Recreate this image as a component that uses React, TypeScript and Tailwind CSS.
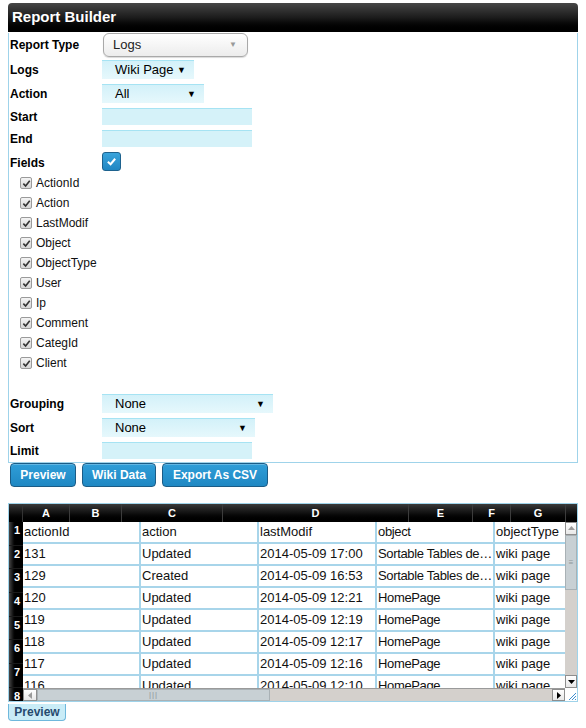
import React from 'react';

const FIELDS = ['ActionId', 'Action', 'LastModif', 'Object', 'ObjectType', 'User', 'Ip', 'Comment', 'CategId', 'Client'];

const COLS = [
  { label: 'A', w: 'w-[47px]' },
  { label: 'B', w: 'w-[52px]' },
  { label: 'C', w: 'w-[101px]' },
  { label: 'D', w: 'w-[186px]' },
  { label: 'E', w: 'w-[64px]' },
  { label: 'F', w: 'w-[38px]' },
  { label: 'G', w: 'w-[55px]' },
];

const ROWS = [
  ['actionId', 'action', 'lastModif', 'object', 'objectType'],
  ['131', 'Updated', '2014-05-09 17:00', 'Sortable Tables de…', 'wiki page'],
  ['129', 'Created', '2014-05-09 16:53', 'Sortable Tables de…', 'wiki page'],
  ['120', 'Updated', '2014-05-09 12:21', 'HomePage', 'wiki page'],
  ['119', 'Updated', '2014-05-09 12:19', 'HomePage', 'wiki page'],
  ['118', 'Updated', '2014-05-09 12:17', 'HomePage', 'wiki page'],
  ['117', 'Updated', '2014-05-09 12:16', 'HomePage', 'wiki page'],
  ['116', 'Updated', '2014-05-09 12:10', 'HomePage', 'wiki page'],
];

const font = "font-['Liberation_Sans',Arial,sans-serif]";

function Caret() {
  return <span className="text-[9px] leading-none text-black">▼</span>;
}

function BlueSelect({ value, width }: { value: string; width: string }) {
  return (
    <div
      className={`${width} h-[19px] flex items-center justify-between pl-[13px] pr-[8px] border-t border-[#a6e3f3] bg-gradient-to-b from-[#d3f1f9] to-[#e6f8fc] text-[13px] text-black`}
    >
      <span>{value}</span>
      <Caret />
    </div>
  );
}

function BlueInput() {
  return <div className="w-[150px] h-[17px] border-t border-[#a6e3f3] bg-[#d5f2f9]" />;
}

function Label({ children }: { children: React.ReactNode }) {
  return <div className="w-[92px] text-[12px] font-bold text-black">{children}</div>;
}

function SmallCheck() {
  return (
    <div className="w-[12px] h-[12px] rounded-[2px] border border-[#9a9a9a] bg-gradient-to-b from-[#f4f4f4] to-[#d6d6d6] flex items-center justify-center">
      <svg viewBox="0 0 10 10" className="w-[9px] h-[9px]">
        <path d="M1.5 5.2 L4 7.8 L8.6 2" fill="none" stroke="#333" strokeWidth="1.8" />
      </svg>
    </div>
  );
}

function Btn({ children, width }: { children: React.ReactNode; width: string }) {
  return (
    <div
      className={`${width} h-[24px] rounded-[4px] border border-[#1b5c86] bg-gradient-to-b from-[#2f9ed8] to-[#1f88c3] text-white text-[12px] font-bold flex items-center justify-center shadow-[inset_0_1px_0_rgba(255,255,255,0.25)]`}
    >
      {children}
    </div>
  );
}

function ArrowBtn({ dir, className }: { dir: 'up' | 'down' | 'left' | 'right'; className: string }) {
  const d = {
    up: 'M1 6 L4.5 2 L8 6 Z',
    down: 'M1 3 L4.5 7 L8 3 Z',
    left: 'M6 1 L2 4.5 L6 8 Z',
    right: 'M3 1 L7 4.5 L3 8 Z',
  }[dir];
  const fill = dir === 'up' || dir === 'left' ? '#9a9a9a' : '#000';
  return (
    <div className={`${className} bg-gradient-to-b from-white to-[#e8e8e8] border border-[#8e8e8e] flex items-center justify-center`}>
      <svg viewBox="0 0 9 9" className="w-[9px] h-[9px]">
        <path d={d} fill={fill} />
      </svg>
    </div>
  );
}

function Sheet() {
  return (
    <div className="mt-[16px] ml-[8px] w-[570px] border border-[#9fd3ea] bg-white">
      {/* column letters */}
      <div className="flex h-[18px] bg-gradient-to-b from-[#3a3a3a] via-[#111] to-black">
        <div className="w-[14px] border-r border-[#333]" />
        {COLS.map((c) => (
          <div
            key={c.label}
            className={`${c.w} border-r border-[#3c3c3c] flex items-center justify-center text-white text-[11px] font-bold`}
          >
            {c.label}
          </div>
        ))}
      </div>
      <div className="flex">
        {/* row numbers */}
        <div className="w-[14px] h-[179px] overflow-hidden flex flex-col bg-black">
          {[1, 2, 3, 4, 5, 6, 7, 8].map((n) => (
            <div
              key={n}
              className="h-[23.7px] shrink-0 flex items-start justify-end pr-[3px] pt-[2px] leading-[12px] text-white text-[11px] font-bold bg-gradient-to-r from-[#4a4a4a] via-black to-black border-b border-[#1a1a1a]"
            >
              {n}
            </div>
          ))}
        </div>
        <div className="flex-1 flex flex-col">
          <div className="flex">
            {/* cells */}
            <div className="w-[542px] h-[166px] overflow-hidden">
              {ROWS.map((r, i) => (
                <div key={i} className="flex h-[22px] shrink-0 border-b-2 border-[#a8d5ea]">
                  {r.map((v, j) => (
                    <div
                      key={j}
                      className={`${j === 4 ? 'w-[69px]' : 'w-[118px] border-r-2 border-[#a8d5ea]'} ${j === 3 ? 'tracking-[-0.35px]' : ''} shrink-0 pl-[1px] text-[13px] leading-[20px] text-[#111] whitespace-nowrap overflow-hidden`}
                    >
                      {v}
                    </div>
                  ))}
                </div>
              ))}
            </div>
            {/* vertical scrollbar */}
            <div className="w-[12px] h-[166px] flex flex-col bg-[#d4d0cc]">
              <ArrowBtn dir="up" className="h-[13px] w-[12px]" />
              <div className="h-[55px] bg-[#c8d0d4] border border-[#a9b1b5] flex items-center justify-center text-[8px] leading-none text-[#8e969a]">
                ≡
              </div>
              <div className="flex-1" />
              <ArrowBtn dir="down" className="h-[13px] w-[12px]" />
            </div>
          </div>
          {/* horizontal scrollbar */}
          <div className="flex h-[13px]">
            <div className="w-[542px] flex bg-[#d4d0cc] border-t border-[#9a9a9a]">
              <ArrowBtn dir="left" className="w-[14px] h-[12px]" />
              <div className="w-[233px] bg-[#c8d0d4] border border-[#a9b1b5] flex items-center justify-center text-[8px] leading-none text-[#8e969a] tracking-[1px]">
                |||
              </div>
              <div className="flex-1" />
              <ArrowBtn dir="right" className="w-[13px] h-[12px]" />
            </div>
            <div className="w-[12px] flex items-end justify-end">
              <svg viewBox="0 0 12 12" className="w-[12px] h-[12px]">
                <path d="M11 4 L4 11 M11 7 L7 11 M11 10 L10 11" stroke="#3f8fd0" strokeWidth="1" />
              </svg>
            </div>
          </div>
        </div>
      </div>
    </div>
  );
}

export default function App() {
  return (
    <div className={`${font} w-[586px] h-[728px] bg-white pt-[3px]`}>
      <div className="ml-[8px] w-[570px]">
        <div className="h-[29px] rounded-t-[4px] bg-gradient-to-b from-[#474747] via-[#1c1c1c] to-black flex items-center pl-[4px] text-white text-[15px] font-bold">
          Report Builder
        </div>
        <div className="border-x border-b border-[#9fd3ea] pl-[1px] pb-[3px]">
          <div className="flex items-center mt-[1px] h-[24px]">
            <Label>Report Type</Label>
            <div className="ml-[1px] w-[145px] h-[24px] rounded-[6px] border border-[#a9a9a9] bg-gradient-to-b from-white to-[#ececec] flex items-center justify-between pl-[9px] pr-[10px] text-[13px] text-[#222] shadow-[0_1px_1px_rgba(0,0,0,0.15)]">
              <span>Logs</span>
              <span className="text-[8px] text-[#999]">▼</span>
            </div>
          </div>
          <div className="flex items-center mt-[3px] h-[19px]">
            <Label>Logs</Label>
            <BlueSelect value="Wiki Page" width="w-[92px]" />
          </div>
          <div className="flex items-center mt-[5px] h-[19px]">
            <Label>Action</Label>
            <BlueSelect value="All" width="w-[102px]" />
          </div>
          <div className="flex items-center mt-[5px] h-[17px]">
            <Label>Start</Label>
            <BlueInput />
          </div>
          <div className="flex items-center mt-[5px] h-[17px]">
            <Label>End</Label>
            <BlueInput />
          </div>
          <div className="flex items-end mt-[5px] h-[20px]">
            <Label>Fields</Label>
            <div className="w-[19px] h-[19px] mb-[1px] rounded-[3px] border border-[#1d628e] bg-gradient-to-b from-[#3aa4dc] to-[#1f86c2] flex items-center justify-center">
              <svg viewBox="0 0 12 12" className="w-[11px] h-[11px]">
                <path d="M2 6.3 L5 9 L10 3" fill="none" stroke="white" strokeWidth="2.2" />
              </svg>
            </div>
          </div>
          <div className="flex flex-col mt-[1px] pl-[10px]">
            {FIELDS.map((f) => (
              <div key={f} className="flex items-center h-[20px] gap-[4px]">
                <SmallCheck />
                <span className="text-[12px] text-[#111]">{f}</span>
              </div>
            ))}
          </div>
          <div className="flex items-center mt-[21px] h-[19px]">
            <Label>Grouping</Label>
            <BlueSelect value="None" width="w-[171px]" />
          </div>
          <div className="flex items-center mt-[5px] h-[19px]">
            <Label>Sort</Label>
            <BlueSelect value="None" width="w-[153px]" />
          </div>
          <div className="flex items-center mt-[5px] h-[17px]">
            <Label>Limit</Label>
            <BlueInput />
          </div>
        </div>
        <div className="flex gap-[6px] ml-[2px]">
          <Btn width="w-[66px]">Preview</Btn>
          <Btn width="w-[74px]">Wiki Data</Btn>
          <Btn width="w-[106px]">Export As CSV</Btn>
        </div>
      </div>
      <Sheet />
      <div className="ml-[8px] mt-[2px] w-[58px] h-[17px] rounded-b-[4px] border border-t-0 border-[#6fb8dc] bg-[#c9ecf7] flex items-center justify-center text-[12px] font-bold text-[#264a6e]">
        Preview
      </div>
    </div>
  );
}
